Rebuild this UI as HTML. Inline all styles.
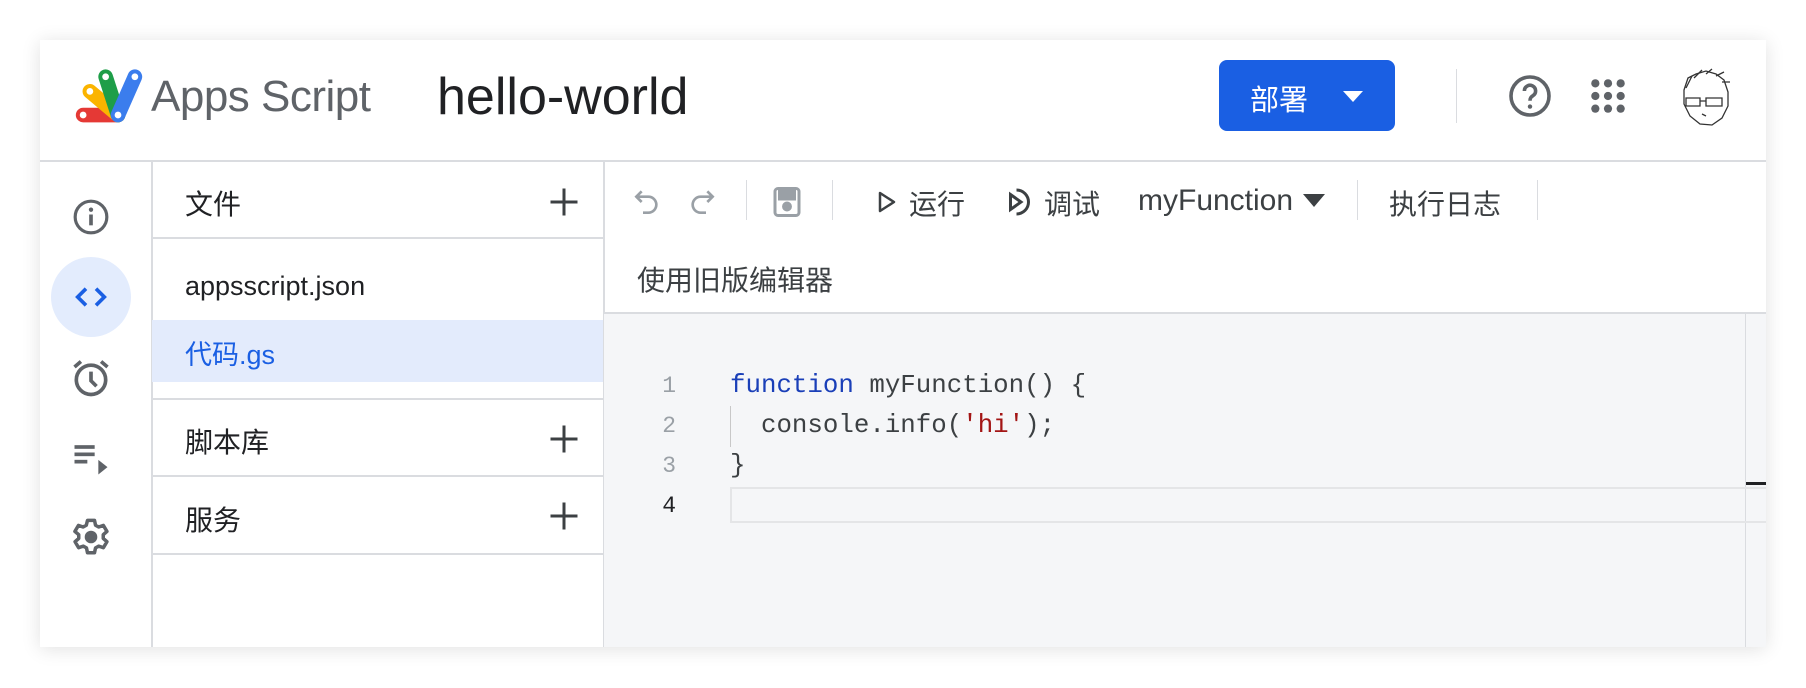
<!DOCTYPE html>
<html><head><meta charset="utf-8"><style>
*{box-sizing:border-box;margin:0;padding:0}
body{width:1806px;height:688px;background:#fff;position:relative;overflow:hidden;font-family:"Liberation Sans","Noto Sans CJK SC",sans-serif;color:#3c4043}
.card{position:absolute;left:40px;top:40px;width:1726px;height:607px;background:#fff;box-shadow:0 2px 18px rgba(0,0,0,.12);overflow:hidden}
.a{position:absolute}
.t{position:absolute;white-space:nowrap}
.hl{position:absolute;height:2px;background:#dadce0}
.vl{position:absolute;width:2px;background:#dadce0}
svg{position:absolute}
.cl{position:absolute;left:0;height:40px;line-height:40px;font-family:'Liberation Mono',monospace;font-size:25.8px;white-space:pre}
.ln{position:absolute;width:46px;text-align:right;color:#9aa0a6;font-size:23px;left:0}
.cd{position:absolute;left:100px}
</style></head><body>
<div class="card">
<!-- header -->
<svg style="left:33px;top:26px" width="72" height="62" viewBox="0 0 64 54">
<g stroke-linecap="round" stroke-width="13">
<line x1="9" y1="43" x2="40" y2="43" stroke="#e53935"/>
<line x1="15" y1="22" x2="40" y2="43" stroke="#fbb400"/>
<line x1="29" y1="9" x2="40" y2="43" stroke="#1e9e48"/>
<line x1="55" y1="9" x2="40" y2="43" stroke="#3b7ded"/>
</g>
<g fill="#fff"><circle cx="9" cy="43" r="3"/><circle cx="15" cy="22" r="3"/><circle cx="29" cy="9" r="3"/><circle cx="55" cy="9" r="3"/><circle cx="40" cy="43" r="3"/></g>
</svg>
<div class="t" style="left:111px;top:32px;font-size:44px;color:#5f6368;letter-spacing:-.5px">Apps Script</div>
<div class="t" style="left:397px;top:27px;font-size:52px;color:#202124">hello-world</div>
<div class="a" style="left:1179px;top:20px;width:176px;height:71px;background:#1a5fe3;border-radius:8px"></div>
<div class="t" style="left:1210px;top:37px;font-size:29px;color:#fff">部署</div>
<svg style="left:1303px;top:51px" width="20" height="12" viewBox="0 0 20 12"><path d="M0 0h20L10 11z" fill="#fff"/></svg>
<div class="vl" style="left:1416px;top:29px;height:54px;width:1px;background:#dadce0"></div>
<svg style="left:1466px;top:32px" width="48" height="48" viewBox="0 0 24 24"><circle cx="12" cy="12" r="9.5" fill="none" stroke="#5f6368" stroke-width="1.8"/><path d="M9.2 9.5a2.8 2.8 0 1 1 4.3 2.3c-1 .7-1.5 1.2-1.5 2.6" fill="none" stroke="#5f6368" stroke-width="1.8"/><circle cx="12" cy="17.3" r="1.1" fill="#5f6368"/></svg>
<svg style="left:1549px;top:37px" width="38" height="38" viewBox="0 0 24 24" fill="#5f6368"><circle cx="4" cy="4" r="2.6"/><circle cx="12" cy="4" r="2.6"/><circle cx="20" cy="4" r="2.6"/><circle cx="4" cy="12" r="2.6"/><circle cx="12" cy="12" r="2.6"/><circle cx="20" cy="12" r="2.6"/><circle cx="4" cy="20" r="2.6"/><circle cx="12" cy="20" r="2.6"/><circle cx="20" cy="20" r="2.6"/></svg>
<svg style="left:1636px;top:28px" width="58" height="60" viewBox="0 0 58 60" fill="none" stroke="#333" stroke-width="1.3"><path d="M8 22 L12 10 L20 6 L30 3 L40 6 L48 12 L52 24 L52 38 L46 50 L36 57 L24 56 L14 48 L8 36 Z"/><path d="M10 20 L16 8 M18 10 L26 2 M30 6 L36 1 M40 8 L48 4 M46 14 L54 14"/><path d="M10 30h14v8H10zM30 30h16v8H30zM24 33h6"/><path d="M26 46l4 2"/></svg>
<div class="hl" style="left:0;top:120px;width:1726px"></div>
<!-- left rail -->
<div class="vl" style="left:111px;top:121px;height:486px"></div>
<svg style="left:31px;top:157px" width="40" height="40" viewBox="0 0 24 24"><circle cx="12" cy="12" r="9.5" fill="none" stroke="#5f6368" stroke-width="1.9"/><path d="M12 10.5v6.5" stroke="#5f6368" stroke-width="2.2"/><circle cx="12" cy="7.6" r="1.3" fill="#5f6368"/></svg>
<div class="a" style="left:11px;top:217px;width:80px;height:80px;border-radius:50%;background:#e3ecfd"></div>
<svg style="left:31px;top:237px" width="40" height="40" viewBox="0 0 24 24" fill="none" stroke="#1a5fe3" stroke-width="2.2"><path d="M9 7l-5 5 5 5M15 7l5 5-5 5"/></svg>
<svg style="left:29px;top:316px" width="44" height="44" viewBox="0 0 24 24" fill="none" stroke="#5f6368" stroke-width="2"><circle cx="12" cy="13" r="8"/><path d="M12 8.5V13.5l3 3M3 6l3.5-3M21 6l-3.5-3"/></svg>
<svg style="left:29px;top:396px" width="44" height="44" viewBox="0 0 24 24" fill="#5f6368"><rect x="3" y="5" width="11" height="2"/><rect x="3" y="9" width="11" height="2"/><rect x="3" y="13" width="7" height="2"/><path d="M16 13v8l5-4z"/></svg>
<svg style="left:30px;top:476px" width="42" height="42" viewBox="0 0 24 24" fill="none" stroke="#5f6368" stroke-width="2"><path d="M10 2.5h4l.6 2.8 1.8 1 2.7-.9 2 3.4-2.1 1.9v2.1l2.1 1.9-2 3.4-2.7-.9-1.8 1-.6 2.8h-4l-.6-2.8-1.8-1-2.7.9-2-3.4 2.1-1.9v-2.1L2.8 8.8l2-3.4 2.7.9 1.8-1z" stroke-linejoin="round"/><circle cx="12" cy="12" r="2.6" fill="#5f6368"/></svg>
<!-- files panel -->
<div class="vl" style="left:563px;top:121px;height:486px"></div>
<div class="t" style="left:145px;top:143px;font-size:28px;color:#202124">文件</div>
<svg style="left:506px;top:144px" width="36" height="36" viewBox="0 0 24 24"><path d="M12 3v18M3 12h18" stroke="#3c4043" stroke-width="2"/></svg>
<div class="hl" style="left:112px;top:197px;width:451px"></div>
<div class="t" style="left:145px;top:231px;font-size:27px;color:#202124">appsscript.json</div>
<div class="a" style="left:112px;top:280px;width:451px;height:62px;background:#e3ebfc"></div>
<div class="t" style="left:145px;top:293px;font-size:27px;color:#1a5fe3">代码.gs</div>
<div class="hl" style="left:112px;top:358px;width:451px"></div>
<div class="t" style="left:145px;top:381px;font-size:28px;color:#202124">脚本库</div>
<svg style="left:506px;top:381px" width="36" height="36" viewBox="0 0 24 24"><path d="M12 3v18M3 12h18" stroke="#3c4043" stroke-width="2"/></svg>
<div class="hl" style="left:112px;top:435px;width:451px"></div>
<div class="t" style="left:145px;top:459px;font-size:28px;color:#202124">服务</div>
<svg style="left:506px;top:458px" width="36" height="36" viewBox="0 0 24 24"><path d="M12 3v18M3 12h18" stroke="#3c4043" stroke-width="2"/></svg>
<div class="hl" style="left:112px;top:513px;width:451px"></div>
<!-- toolbar -->
<svg style="left:591px;top:146px" width="32" height="32" viewBox="0 0 24 24" fill="none" stroke="#9aa0a6" stroke-width="2"><path d="M8 4L4 8l4 4M4 8h9a6 6 0 0 1 0 12H9"/></svg>
<svg style="left:646px;top:146px" width="32" height="32" viewBox="0 0 24 24" fill="none" stroke="#9aa0a6" stroke-width="2"><path d="M16 4l4 4-4 4M20 8h-9a6 6 0 0 0 0 12h4"/></svg>
<div class="vl" style="left:706px;top:140px;height:40px;width:1px"></div>
<svg style="left:729px;top:144px" width="36" height="36" viewBox="0 0 24 24" fill="none" stroke="#9aa0a6" stroke-width="2"><rect x="4" y="3" width="16" height="18" rx="2"/><rect x="7" y="5" width="10" height="5" fill="#9aa0a6"/><circle cx="12" cy="15" r="2.3" fill="#9aa0a6"/></svg>
<div class="vl" style="left:792px;top:140px;height:40px;width:1px"></div>
<svg style="left:835px;top:150px" width="24" height="24" viewBox="0 0 24 24"><path d="M5 3l14 9-14 9z" fill="none" stroke="#3c4043" stroke-width="2.5" stroke-linejoin="round"/></svg>
<div class="t" style="left:869px;top:143px;font-size:28px;color:#3c4043">运行</div>
<svg style="left:963px;top:144px" width="36" height="36" viewBox="0 0 24 24" fill="none" stroke="#3c4043" stroke-width="2"><path d="M5 7l7 5-7 5z"/><path d="M9 4a8 8 0 1 1 0 16"/></svg>
<div class="t" style="left:1004px;top:143px;font-size:28px;color:#3c4043">调试</div>
<div class="t" style="left:1098px;top:144px;font-size:30px;color:#3c4043">myFunction</div>
<svg style="left:1263px;top:154px" width="22" height="14" viewBox="0 0 22 14"><path d="M0 0h22L11 13z" fill="#3c4043"/></svg>
<div class="vl" style="left:1317px;top:140px;height:40px;width:1px"></div>
<div class="t" style="left:1349px;top:143px;font-size:28px;color:#3c4043">执行日志</div>
<div class="vl" style="left:1497px;top:140px;height:40px;width:1px"></div>
<div class="t" style="left:597px;top:219px;font-size:28px;color:#3c4043">使用旧版编辑器</div>
<div class="hl" style="left:564px;top:272px;width:1162px"></div>
<!-- editor -->
<div class="a" style="left:564px;top:274px;width:1162px;height:333px;background:#f5f6f8"></div>
<div class="vl" style="left:1705px;top:274px;height:333px;width:1px;background:#dadce0"></div>
<div class="a" style="left:1706px;top:442px;width:20px;height:3px;background:#202124"></div>
<div class="a" style="left:690px;top:447px;width:1050px;height:36px;border:2px solid #e4e5e7"></div>
<div class="a" style="left:690px;top:366px;width:1px;height:41px;background:#c8c8c8"></div>
<div class="a" style="left:590px;top:326px;width:1100px;height:170px">
<div class="cl" style="top:0"><span class="ln">1</span><span class="cd"><span style="color:#1a3fb8">function</span> myFunction() {</span></div>
<div class="cl" style="top:40px"><span class="ln">2</span><span class="cd">  console.info(<span style="color:#a31515">'hi'</span>);</span></div>
<div class="cl" style="top:80px"><span class="ln">3</span><span class="cd">}</span></div>
<div class="cl" style="top:120px"><span class="ln" style="color:#202124">4</span></div>
</div>
</div>
</body></html>
